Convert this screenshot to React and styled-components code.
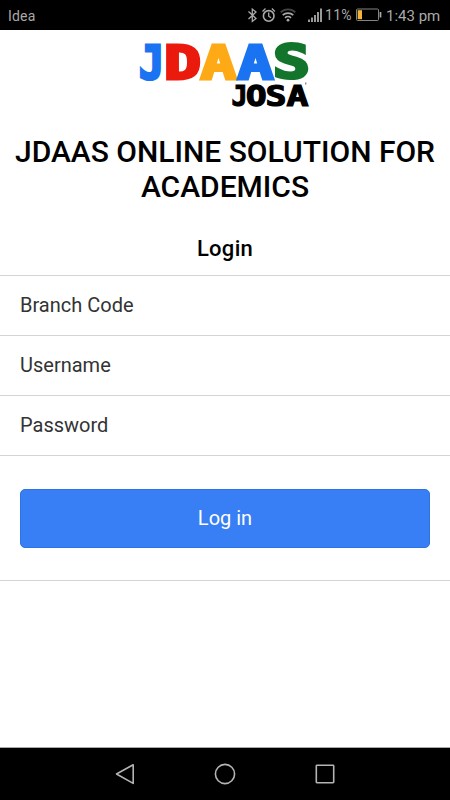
import styled, { createGlobalStyle } from 'styled-components';

const COLORS = {
  blue: "#387ef5",
  line: "#d4d4d4",
  status: "#a9a9a9",
  nav: "#b4b4b4"
}

const GlobalStyle = createGlobalStyle`
* {
  box-sizing:border-box;
}
body {
  margin:0;
  background:white;
  font-family:Roboto, sans-serif;
}
`

const StyledScreen = styled.div`
width:100%;
height:100vh;
display:flex;
flex-direction:column;
overflow:hidden;
`

const StyledStatusBar = styled.header`
height:30px;
flex:none;
padding:0 10px 0 8px;
display:flex;
align-items:center;
justify-content:space-between;
background:black;
color:${COLORS.status};
white-space:nowrap;
`

const StyledStatusText = styled.span`
font-size:${props => props.$size || 14}px;
line-height:28px;
padding-top:${props => props.$drop || 0}px;
letter-spacing:${props => props.$spacing || 0}px;
width:${props => props.$width}px;
padding-left:${props => props.$indent || 0}px;
`

const StyledStatusGroup = styled.div`
display:flex;
align-items:center;
height:30px;
svg {
  display:block;
}
`

const StyledMain = styled.main`
flex:1;
display:flex;
flex-direction:column;
border-bottom:1px solid #a8a8a8;
`

const StyledLogo = styled.svg`
display:block;
flex:none;
align-self:center;
width:190px;
height:80px;
margin-top:4px;
`

const StyledHeading = styled.h1`
margin:20px 0 0;
font-size:30px;
line-height:35px;
font-weight:500;
text-align:center;
color:black;
`

const StyledSubheading = styled.h2`
margin:29px 0 0;
height:42px;
font-size:22px;
line-height:32px;
font-weight:500;
letter-spacing:.3px;
text-align:center;
color:black;
`

const StyledForm = styled.form`
display:flex;
flex-direction:column;
border-top:1px solid ${COLORS.line};
`

const StyledField = styled.label`
height:60px;
padding:0 20px 1px;
display:flex;
align-items:center;
border-bottom:1px solid ${COLORS.line};
font-size:20px;
color:#333;
`

const StyledActions = styled.div`
padding:33px 20px 32px;
border-bottom:1px solid ${COLORS.line};
`

const StyledButton = styled.button`
display:block;
width:100%;
height:59px;
padding:0 0 2px;
border:1px solid #2f73e0;
border-radius:5px;
background:${COLORS.blue};
color:white;
font-family:inherit;
font-size:20px;
`

const StyledNavBar = styled.nav`
height:52px;
flex:none;
display:grid;
grid-template-columns:repeat(3, 100px);
justify-content:center;
justify-items:center;
align-items:center;
background:black;
`

const LETTERS = [
  { char: "J", x: 139, y: 78.5, width: 25, size: 46.5, weight: 3, color: "#1a73f0" },
  { char: "D", x: 164, y: 78.5, width: 37, size: 46.5, weight: 3, color: "#ea1a0c" },
  { char: "A", x: 200.5, y: 78.5, width: 36, size: 46.5, weight: 3, color: "#fdaa16" },
  { char: "A", x: 237.5, y: 78.5, width: 36, size: 46.5, weight: 3, color: "#1a73f0" },
  { char: "S", x: 273, y: 78, width: 37, size: 45.5, weight: 3, color: "#13752b" },
  { char: "J", x: 231.5, y: 106, width: 16, size: 28, weight: 1.2, color: "black" },
  { char: "O", x: 246, y: 106, width: 20.5, size: 28, weight: 1.4, color: "black" },
  { char: "S", x: 265.5, y: 106, width: 21, size: 28, weight: 1.2, color: "black" },
  { char: "A", x: 286.5, y: 106, width: 22, size: 28, weight: 1.2, color: "black" },
]

const FIELDS = ["Branch Code", "Username", "Password"]

const Logo = () => (
  <StyledLogo viewBox="130 34 190 80">
    {LETTERS.map((letter, i) => (
      <text
        key={i}
        x={letter.x}
        y={letter.y}
        fill={letter.color}
        stroke={letter.color}
        strokeWidth={letter.weight}
        fontFamily="DejaVu Sans Mono, monospace"
        fontWeight="700"
        fontSize={letter.size}
        textLength={letter.width}
        lengthAdjust="spacingAndGlyphs"
      >
        {letter.char}
      </text>
    ))}
    <path d="M305.8 82.5v2" stroke="#333" strokeWidth=".8" />
  </StyledLogo>
)

const StatusIcons = () => (
  <svg width="78" height="30" viewBox="247 0 78 30" fill="none" stroke={COLORS.status} strokeWidth="1.3">
    <path d="M248.5 11.5l7.5 7-3.7 3V9l3.7 3-7.5 7" />
    <circle cx="268.7" cy="15.9" r="5.3" strokeWidth="1.6" />
    <path d="M268.7 12.6v3.6l2.4 1.5M262.5 11.4l3-2.8M274.9 11.4l-3-2.8" />
    <path d="M280.7 12.4a10.5 10.5 0 0 1 14.6 0" stroke="#444" strokeWidth="1.7" />
    <path d="M282.7 15.2a7.6 7.6 0 0 1 10.6 0M285 17.9a4.3 4.3 0 0 1 6 0" strokeWidth="1.7" />
    <circle cx="288" cy="20.2" r="1.4" fill={COLORS.status} stroke="none" />
    <path d="M309 22v-2.5M312 22v-4.5M315 22v-7M318 22v-10M321 22V8.5" strokeWidth="1.8" />
  </svg>
)

const Battery = () => (
  <svg width="27" height="30" viewBox="355 0 27 30">
    <rect x="356.5" y="9" width="22" height="11.5" rx="1" fill="none" stroke="#858585" />
    <rect x="357.7" y="10.2" width="4.3" height="9" fill="#f6b33c" />
    <path d="M380.5 12v5.5" stroke={COLORS.status} strokeWidth="1.7" />
  </svg>
)

export default function App() {
  return (
    <>
      <GlobalStyle />
      <StyledScreen>
        <StyledStatusBar>
          <StyledStatusText $spacing={.2} $drop={2}>Idea</StyledStatusText>
          <StyledStatusGroup>
            <StatusIcons />
            <StyledStatusText $width={30} $spacing={.3}>11%</StyledStatusText>
            <Battery />
            <StyledStatusText $width={58} $indent={4} $size={15} $drop={2}>1:43 pm</StyledStatusText>
          </StyledStatusGroup>
        </StyledStatusBar>
        <StyledMain>
          <Logo />
          <StyledHeading>JDAAS ONLINE SOLUTION FOR ACADEMICS</StyledHeading>
          <StyledSubheading>Login</StyledSubheading>
          <StyledForm onSubmit={e => e.preventDefault()}>
            {FIELDS.map(field => <StyledField key={field}>{field}</StyledField>)}
            <StyledActions>
              <StyledButton>Log in</StyledButton>
            </StyledActions>
          </StyledForm>
        </StyledMain>
        <StyledNavBar>
          <svg width="24" height="24" fill="none" stroke={COLORS.nav} strokeWidth="1.6" strokeLinejoin="round">
            <path d="M3.5 12L20.2 2.8v18.6z" />
          </svg>
          <svg width="24" height="24" fill="none" stroke={COLORS.nav} strokeWidth="1.6">
            <circle cx="12" cy="12" r="9.6" />
          </svg>
          <svg width="24" height="24" fill="none" stroke={COLORS.nav} strokeWidth="1.6">
            <rect x="3.3" y="3.3" width="17.4" height="17.4" rx=".6" />
          </svg>
        </StyledNavBar>
      </StyledScreen>
    </>
  )
}
